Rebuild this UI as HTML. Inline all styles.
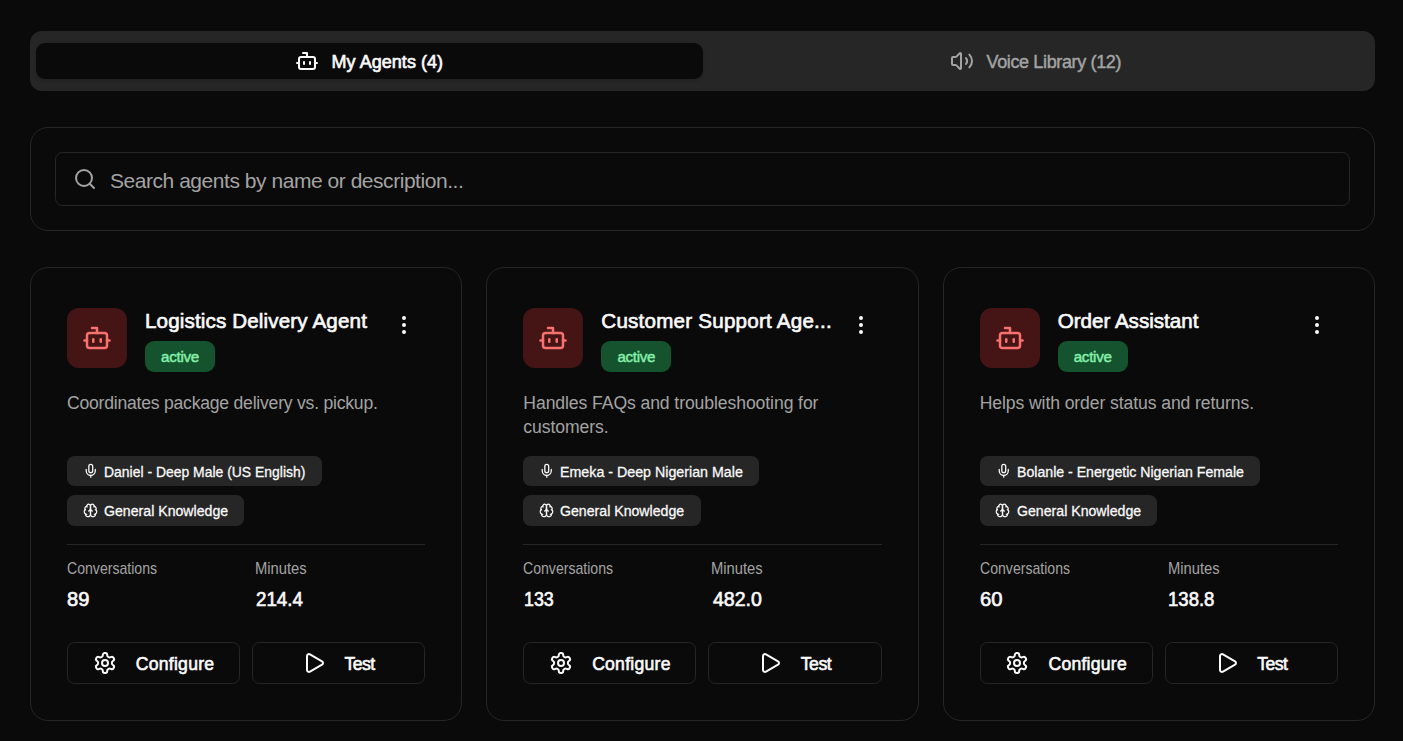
<!DOCTYPE html>
<html lang="en">
<head>
<meta charset="utf-8">
<title>Voice Agents</title>
<style>
*{box-sizing:border-box;margin:0;padding:0}
html,body{width:1403px;height:741px;overflow:hidden;background:#0a0a0a}
body{position:relative;font-family:"Liberation Sans",Arial,sans-serif;color:#fafafa;-webkit-font-smoothing:antialiased}
.ic{display:block;flex:none}
.tabs{position:absolute;left:30px;top:31px;width:1345px;height:60px;border-radius:12px;background:#262626}
.tab{position:absolute;top:12px;height:36px;border-radius:9px;display:flex;align-items:center;justify-content:center;font-size:18px;line-height:36px}
.tab.on{left:6px;width:667px;background:#0a0a0a;box-shadow:0 1.5px 3px rgba(0,0,0,.12);color:#fafafa;-webkit-text-stroke:.65px #fafafa}
.tab.off{left:673px;width:666px;color:#a3a3a3;-webkit-text-stroke:.45px #a3a3a3}
.tab .ic{margin-right:12.8px}
.tab span{display:block;position:relative;top:1px;margin-right:1.2px}
.searchcard{position:absolute;left:30px;top:127px;width:1345px;height:104px;border:1px solid #262626;border-radius:18px;background:#0a0a0a}
.searchbox{position:absolute;left:24px;top:24px;width:1295px;height:54px;border:1px solid #262626;border-radius:7.5px;background:#0a0a0a}
.searchbox .ic{position:absolute;left:17px;top:14px;color:#a3a3a3}
.searchbox .ph{position:absolute;left:54px;top:1.6px;line-height:52px;font-size:21px;color:#a3a3a3;white-space:nowrap}
.card{position:absolute;top:267px;width:432.33px;height:454px;border:1px solid #262626;border-radius:18px;background:#0a0a0a}
.avatar{position:absolute;left:36px;top:40px;width:60px;height:60px;border-radius:12px;background:#451515;color:#f87171;display:flex;align-items:center;justify-content:center}
.title{position:absolute;left:114px;top:37px;width:240px;height:32px;line-height:32px;font-size:20.6px;white-space:nowrap;-webkit-text-stroke:.65px #fafafa}
.badge{position:absolute;left:114px;top:73px;width:70px;height:31px;border-radius:9px;background:#14532d;color:#86efac;font-size:15.2px;line-height:31px;text-align:center;-webkit-text-stroke:.45px #86efac}
.menu{position:absolute;left:361.3px;top:45px;color:#fafafa}
.desc{position:absolute;left:36px;top:123.25px;width:358px;font-size:17.6px;line-height:24px;color:#a3a3a3}
.chip{position:absolute;left:36px;height:30px;border-radius:7.5px;background:#262626;color:#fafafa;font-size:15.3px;line-height:30px;white-space:nowrap;-webkit-text-stroke:.3px #fafafa}
.chip .ic{position:absolute;left:15.85px;top:6.5px}
.chip span{position:absolute;left:37px;top:1px;transform-origin:0 50%}
.rule{position:absolute;left:36px;right:36px;top:276px;height:1px;background:#262626}
.lab{position:absolute;transform-origin:0 50%;font-size:15.7px;line-height:20px;color:#a3a3a3;white-space:nowrap}
.val{position:absolute;transform-origin:0 50%;font-size:20.5px;line-height:28px;color:#fafafa;white-space:nowrap;-webkit-text-stroke:.65px #fafafa}
.btn{position:absolute;top:374px;width:173.17px;height:42px;border:1px solid #262626;border-radius:7.5px;background:#0a0a0a;display:flex;align-items:center;justify-content:center;font-size:17.6px;line-height:40px;color:#fafafa;-webkit-text-stroke:.6px #fafafa}
.btn .ic{margin-right:18px}
.btn span{display:block;position:relative;top:1px}
</style>
</head>
<body>
<div class="tabs">
  <div class="tab on"><svg class="ic " width="24" height="24" viewBox="0 0 24 24" fill="none" stroke="currentColor" stroke-width="2" stroke-linecap="round" stroke-linejoin="round"><path d="M12 8V4H8"/><rect width="16" height="12" x="4" y="8" rx="2"/><path d="M2 14h2"/><path d="M20 14h2"/><path d="M15 13v2"/><path d="M9 13v2"/></svg><span style="letter-spacing:0.04px">My Agents (4)</span></div>
  <div class="tab off"><svg class="ic " width="24" height="24" viewBox="0 0 24 24" fill="none" stroke="currentColor" stroke-width="2" stroke-linecap="round" stroke-linejoin="round"><path d="M11 4.702a.705.705 0 0 0-1.203-.498L6.413 7.587A1.4 1.4 0 0 1 5.416 8H3a1 1 0 0 0-1 1v6a1 1 0 0 0 1 1h2.416a1.4 1.4 0 0 1 .997.413l3.383 3.384A.705.705 0 0 0 11 19.298z"/><path d="M16 9a5 5 0 0 1 0 6"/><path d="M19.364 18.364a9 9 0 0 0 0-12.728"/></svg><span style="letter-spacing:-0.36px">Voice Library (12)</span></div>
</div>
<div class="searchcard">
  <div class="searchbox"><svg class="ic " width="24" height="24" viewBox="0 0 24 24" fill="none" stroke="currentColor" stroke-width="2" stroke-linecap="round" stroke-linejoin="round"><circle cx="11" cy="11" r="8"/><path d="m21 21-4.3-4.3"/></svg><div class="ph" style="letter-spacing:-0.46px">Search agents by name or description...</div></div>
</div>

<div class="card" style="left:30px">
  <div class="avatar"><svg class="ic " width="30" height="30" viewBox="0 0 24 24" fill="none" stroke="currentColor" stroke-width="2" stroke-linecap="round" stroke-linejoin="round"><path d="M12 8V4H8"/><rect width="16" height="12" x="4" y="8" rx="2"/><path d="M2 14h2"/><path d="M20 14h2"/><path d="M15 13v2"/><path d="M9 13v2"/></svg></div>
  <div class="title" style="letter-spacing:0.14px">Logistics Delivery Agent</div>
  <div class="badge" style="letter-spacing:-0.3px">active</div>
  <svg class="ic menu" width="24" height="24" viewBox="0 0 24 24" fill="none" stroke="currentColor" stroke-width="2" stroke-linecap="round" stroke-linejoin="round"><circle cx="12" cy="12" r="1"/><circle cx="12" cy="5" r="1"/><circle cx="12" cy="19" r="1"/></svg>
  <p class="desc" style="letter-spacing:-0.23px">Coordinates package delivery vs. pickup.</p>
  <div class="chip" style="top:188px;width:255px"><svg class="ic " width="15.5" height="15.5" viewBox="0 0 24 24" fill="none" stroke="currentColor" stroke-width="2" stroke-linecap="round" stroke-linejoin="round"><path d="M12 2a3 3 0 0 0-3 3v7a3 3 0 0 0 6 0V5a3 3 0 0 0-3-3Z"/><path d="M19 10v2a7 7 0 0 1-14 0v-2"/><line x1="12" x2="12" y1="19" y2="22"/></svg><span style="transform:scaleX(0.911)">Daniel - Deep Male (US English)</span></div>
  <div class="chip" style="top:227px;width:177.4px;height:31px;line-height:31px"><svg class="ic " width="15" height="15" viewBox="0 0 24 24" fill="none" stroke="currentColor" stroke-width="2" stroke-linecap="round" stroke-linejoin="round" style="top:8.2px;left:15.8px"><path d="M12 5a3 3 0 1 0-5.997.125 4 4 0 0 0-2.526 5.77 4 4 0 0 0 .556 6.588A4 4 0 1 0 12 18Z"/><path d="M12 5a3 3 0 1 1 5.997.125 4 4 0 0 1 2.526 5.77 4 4 0 0 1-.556 6.588A4 4 0 1 1 12 18Z"/><path d="M15 13a4.5 4.5 0 0 1-3-4 4.5 4.5 0 0 1-3 4"/><path d="M17.599 6.5a3 3 0 0 0 .399-1.375"/><path d="M6.003 5.125A3 3 0 0 0 6.401 6.5"/><path d="M3.477 10.896a4 4 0 0 1 .585-.396"/><path d="M19.938 10.5a4 4 0 0 1 .585.396"/><path d="M6 18a4 4 0 0 1-1.967-.516"/><path d="M19.967 17.484A4 4 0 0 1 18 18"/></svg><span style="top:0;transform:scaleX(0.924)">General Knowledge</span></div>
  <div class="rule"></div>
  <div class="lab" style="left:36px;top:291px;transform:scaleX(0.8985)">Conversations</div>
  <div class="lab" style="left:224px;top:291px;transform:scaleX(0.941)">Minutes</div>
  <div class="val" style="left:36.4px;top:316.5px;transform:scaleX(0.98)">89</div>
  <div class="val" style="left:225px;top:316.5px;transform:scaleX(0.915)">214.4</div>
  <div class="btn" style="left:36px"><svg class="ic " width="24" height="24" viewBox="0 0 24 24" fill="none" stroke="currentColor" stroke-width="2" stroke-linecap="round" stroke-linejoin="round" style="margin-right:19px"><path d="M12.22 2h-.44a2 2 0 0 0-2 2v.18a2 2 0 0 1-1 1.73l-.43.25a2 2 0 0 1-2 0l-.15-.08a2 2 0 0 0-2.73.73l-.22.38a2 2 0 0 0 .73 2.73l.15.1a2 2 0 0 1 1 1.72v.51a2 2 0 0 1-1 1.74l-.15.09a2 2 0 0 0-.73 2.73l.22.38a2 2 0 0 0 2.73.73l.15-.08a2 2 0 0 1 2 0l.43.25a2 2 0 0 1 1 1.73V20a2 2 0 0 0 2 2h.44a2 2 0 0 0 2-2v-.18a2 2 0 0 1 1-1.73l.43-.25a2 2 0 0 1 2 0l.15.08a2 2 0 0 0 2.73-.73l.22-.39a2 2 0 0 0-.73-2.73l-.15-.08a2 2 0 0 1-1-1.74v-.5a2 2 0 0 1 1-1.74l.15-.09a2 2 0 0 0 .73-2.73l-.22-.38a2 2 0 0 0-2.73-.73l-.15.08a2 2 0 0 1-2 0l-.43-.25a2 2 0 0 1-1-1.73V4a2 2 0 0 0-2-2z"/><circle cx="12" cy="12" r="3"/></svg><span style="letter-spacing:0.25px">Configure</span></div>
  <div class="btn" style="left:221.17px"><svg class="ic " width="24" height="24" viewBox="0 0 24 24" fill="none" stroke="currentColor" stroke-width="2" stroke-linecap="round" stroke-linejoin="round" style="margin-right:18.4px"><path d="M5 5a2 2 0 0 1 3.008-1.728l11.997 6.998a2 2 0 0 1 .003 3.458l-12 7A2 2 0 0 1 5 19z"/></svg><span style="margin-right:.6px;letter-spacing:-0.5px">Test</span></div>
</div>
<div class="card" style="left:486.33px">
  <div class="avatar"><svg class="ic " width="30" height="30" viewBox="0 0 24 24" fill="none" stroke="currentColor" stroke-width="2" stroke-linecap="round" stroke-linejoin="round"><path d="M12 8V4H8"/><rect width="16" height="12" x="4" y="8" rx="2"/><path d="M2 14h2"/><path d="M20 14h2"/><path d="M15 13v2"/><path d="M9 13v2"/></svg></div>
  <div class="title" style="letter-spacing:0.22px">Customer Support Age...</div>
  <div class="badge" style="letter-spacing:-0.3px">active</div>
  <svg class="ic menu" width="24" height="24" viewBox="0 0 24 24" fill="none" stroke="currentColor" stroke-width="2" stroke-linecap="round" stroke-linejoin="round"><circle cx="12" cy="12" r="1"/><circle cx="12" cy="5" r="1"/><circle cx="12" cy="19" r="1"/></svg>
  <p class="desc" style="letter-spacing:-0.09px">Handles FAQs and troubleshooting for customers.</p>
  <div class="chip" style="top:188px;width:236px"><svg class="ic " width="15.5" height="15.5" viewBox="0 0 24 24" fill="none" stroke="currentColor" stroke-width="2" stroke-linecap="round" stroke-linejoin="round"><path d="M12 2a3 3 0 0 0-3 3v7a3 3 0 0 0 6 0V5a3 3 0 0 0-3-3Z"/><path d="M19 10v2a7 7 0 0 1-14 0v-2"/><line x1="12" x2="12" y1="19" y2="22"/></svg><span style="transform:scaleX(0.931)">Emeka - Deep Nigerian Male</span></div>
  <div class="chip" style="top:227px;width:177.4px;height:31px;line-height:31px"><svg class="ic " width="15" height="15" viewBox="0 0 24 24" fill="none" stroke="currentColor" stroke-width="2" stroke-linecap="round" stroke-linejoin="round" style="top:8.2px;left:15.8px"><path d="M12 5a3 3 0 1 0-5.997.125 4 4 0 0 0-2.526 5.77 4 4 0 0 0 .556 6.588A4 4 0 1 0 12 18Z"/><path d="M12 5a3 3 0 1 1 5.997.125 4 4 0 0 1 2.526 5.77 4 4 0 0 1-.556 6.588A4 4 0 1 1 12 18Z"/><path d="M15 13a4.5 4.5 0 0 1-3-4 4.5 4.5 0 0 1-3 4"/><path d="M17.599 6.5a3 3 0 0 0 .399-1.375"/><path d="M6.003 5.125A3 3 0 0 0 6.401 6.5"/><path d="M3.477 10.896a4 4 0 0 1 .585-.396"/><path d="M19.938 10.5a4 4 0 0 1 .585.396"/><path d="M6 18a4 4 0 0 1-1.967-.516"/><path d="M19.967 17.484A4 4 0 0 1 18 18"/></svg><span style="top:0;transform:scaleX(0.924)">General Knowledge</span></div>
  <div class="rule"></div>
  <div class="lab" style="left:36px;top:291px;transform:scaleX(0.8985)">Conversations</div>
  <div class="lab" style="left:224px;top:291px;transform:scaleX(0.941)">Minutes</div>
  <div class="val" style="left:36.4px;top:316.5px;transform:scaleX(0.87)">133</div>
  <div class="val" style="left:225.3px;top:316.5px;transform:scaleX(0.953)">482.0</div>
  <div class="btn" style="left:36px"><svg class="ic " width="24" height="24" viewBox="0 0 24 24" fill="none" stroke="currentColor" stroke-width="2" stroke-linecap="round" stroke-linejoin="round" style="margin-right:19px"><path d="M12.22 2h-.44a2 2 0 0 0-2 2v.18a2 2 0 0 1-1 1.73l-.43.25a2 2 0 0 1-2 0l-.15-.08a2 2 0 0 0-2.73.73l-.22.38a2 2 0 0 0 .73 2.73l.15.1a2 2 0 0 1 1 1.72v.51a2 2 0 0 1-1 1.74l-.15.09a2 2 0 0 0-.73 2.73l.22.38a2 2 0 0 0 2.73.73l.15-.08a2 2 0 0 1 2 0l.43.25a2 2 0 0 1 1 1.73V20a2 2 0 0 0 2 2h.44a2 2 0 0 0 2-2v-.18a2 2 0 0 1 1-1.73l.43-.25a2 2 0 0 1 2 0l.15.08a2 2 0 0 0 2.73-.73l.22-.39a2 2 0 0 0-.73-2.73l-.15-.08a2 2 0 0 1-1-1.74v-.5a2 2 0 0 1 1-1.74l.15-.09a2 2 0 0 0 .73-2.73l-.22-.38a2 2 0 0 0-2.73-.73l-.15.08a2 2 0 0 1-2 0l-.43-.25a2 2 0 0 1-1-1.73V4a2 2 0 0 0-2-2z"/><circle cx="12" cy="12" r="3"/></svg><span style="letter-spacing:0.25px">Configure</span></div>
  <div class="btn" style="left:221.17px"><svg class="ic " width="24" height="24" viewBox="0 0 24 24" fill="none" stroke="currentColor" stroke-width="2" stroke-linecap="round" stroke-linejoin="round" style="margin-right:18.4px"><path d="M5 5a2 2 0 0 1 3.008-1.728l11.997 6.998a2 2 0 0 1 .003 3.458l-12 7A2 2 0 0 1 5 19z"/></svg><span style="margin-right:.6px;letter-spacing:-0.5px">Test</span></div>
</div>
<div class="card" style="left:942.67px">
  <div class="avatar"><svg class="ic " width="30" height="30" viewBox="0 0 24 24" fill="none" stroke="currentColor" stroke-width="2" stroke-linecap="round" stroke-linejoin="round"><path d="M12 8V4H8"/><rect width="16" height="12" x="4" y="8" rx="2"/><path d="M2 14h2"/><path d="M20 14h2"/><path d="M15 13v2"/><path d="M9 13v2"/></svg></div>
  <div class="title" style="letter-spacing:0.0px">Order Assistant</div>
  <div class="badge" style="letter-spacing:-0.3px">active</div>
  <svg class="ic menu" width="24" height="24" viewBox="0 0 24 24" fill="none" stroke="currentColor" stroke-width="2" stroke-linecap="round" stroke-linejoin="round"><circle cx="12" cy="12" r="1"/><circle cx="12" cy="5" r="1"/><circle cx="12" cy="19" r="1"/></svg>
  <p class="desc" style="letter-spacing:-0.095px">Helps with order status and returns.</p>
  <div class="chip" style="top:188px;width:280px"><svg class="ic " width="15.5" height="15.5" viewBox="0 0 24 24" fill="none" stroke="currentColor" stroke-width="2" stroke-linecap="round" stroke-linejoin="round"><path d="M12 2a3 3 0 0 0-3 3v7a3 3 0 0 0 6 0V5a3 3 0 0 0-3-3Z"/><path d="M19 10v2a7 7 0 0 1-14 0v-2"/><line x1="12" x2="12" y1="19" y2="22"/></svg><span style="transform:scaleX(0.9235)">Bolanle - Energetic Nigerian Female</span></div>
  <div class="chip" style="top:227px;width:177.4px;height:31px;line-height:31px"><svg class="ic " width="15" height="15" viewBox="0 0 24 24" fill="none" stroke="currentColor" stroke-width="2" stroke-linecap="round" stroke-linejoin="round" style="top:8.2px;left:15.8px"><path d="M12 5a3 3 0 1 0-5.997.125 4 4 0 0 0-2.526 5.77 4 4 0 0 0 .556 6.588A4 4 0 1 0 12 18Z"/><path d="M12 5a3 3 0 1 1 5.997.125 4 4 0 0 1 2.526 5.77 4 4 0 0 1-.556 6.588A4 4 0 1 1 12 18Z"/><path d="M15 13a4.5 4.5 0 0 1-3-4 4.5 4.5 0 0 1-3 4"/><path d="M17.599 6.5a3 3 0 0 0 .399-1.375"/><path d="M6.003 5.125A3 3 0 0 0 6.401 6.5"/><path d="M3.477 10.896a4 4 0 0 1 .585-.396"/><path d="M19.938 10.5a4 4 0 0 1 .585.396"/><path d="M6 18a4 4 0 0 1-1.967-.516"/><path d="M19.967 17.484A4 4 0 0 1 18 18"/></svg><span style="top:0;transform:scaleX(0.924)">General Knowledge</span></div>
  <div class="rule"></div>
  <div class="lab" style="left:36px;top:291px;transform:scaleX(0.8985)">Conversations</div>
  <div class="lab" style="left:224px;top:291px;transform:scaleX(0.941)">Minutes</div>
  <div class="val" style="left:36.5px;top:316.5px;transform:scaleX(0.985)">60</div>
  <div class="val" style="left:224.5px;top:316.5px;transform:scaleX(0.905)">138.8</div>
  <div class="btn" style="left:36px"><svg class="ic " width="24" height="24" viewBox="0 0 24 24" fill="none" stroke="currentColor" stroke-width="2" stroke-linecap="round" stroke-linejoin="round" style="margin-right:19px"><path d="M12.22 2h-.44a2 2 0 0 0-2 2v.18a2 2 0 0 1-1 1.73l-.43.25a2 2 0 0 1-2 0l-.15-.08a2 2 0 0 0-2.73.73l-.22.38a2 2 0 0 0 .73 2.73l.15.1a2 2 0 0 1 1 1.72v.51a2 2 0 0 1-1 1.74l-.15.09a2 2 0 0 0-.73 2.73l.22.38a2 2 0 0 0 2.73.73l.15-.08a2 2 0 0 1 2 0l.43.25a2 2 0 0 1 1 1.73V20a2 2 0 0 0 2 2h.44a2 2 0 0 0 2-2v-.18a2 2 0 0 1 1-1.73l.43-.25a2 2 0 0 1 2 0l.15.08a2 2 0 0 0 2.73-.73l.22-.39a2 2 0 0 0-.73-2.73l-.15-.08a2 2 0 0 1-1-1.74v-.5a2 2 0 0 1 1-1.74l.15-.09a2 2 0 0 0 .73-2.73l-.22-.38a2 2 0 0 0-2.73-.73l-.15.08a2 2 0 0 1-2 0l-.43-.25a2 2 0 0 1-1-1.73V4a2 2 0 0 0-2-2z"/><circle cx="12" cy="12" r="3"/></svg><span style="letter-spacing:0.25px">Configure</span></div>
  <div class="btn" style="left:221.17px"><svg class="ic " width="24" height="24" viewBox="0 0 24 24" fill="none" stroke="currentColor" stroke-width="2" stroke-linecap="round" stroke-linejoin="round" style="margin-right:18.4px"><path d="M5 5a2 2 0 0 1 3.008-1.728l11.997 6.998a2 2 0 0 1 .003 3.458l-12 7A2 2 0 0 1 5 19z"/></svg><span style="margin-right:.6px;letter-spacing:-0.5px">Test</span></div>
</div>
</body>
</html>
